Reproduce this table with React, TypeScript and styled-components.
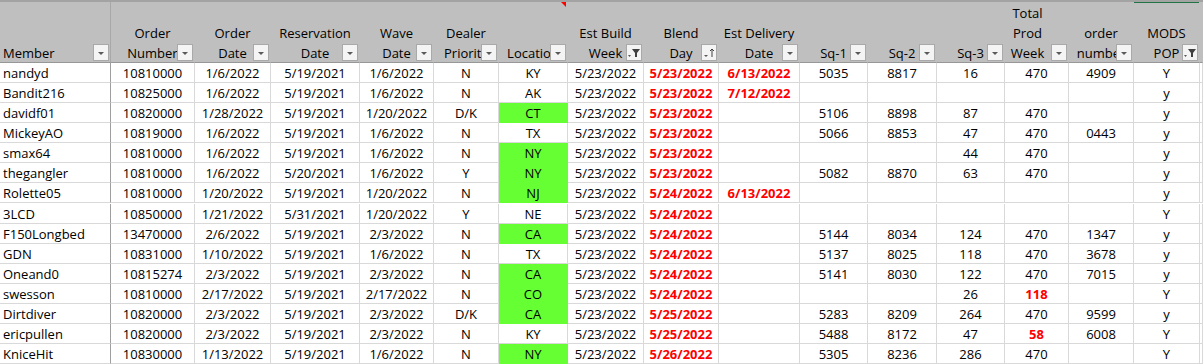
import { Fragment } from "react";
import styled, { createGlobalStyle } from "styled-components";

const GlobalStyle = createGlobalStyle`
	html, body {
		margin: 0;
		padding: 0;
		background: #ffffff;
	}
	body {
		font-family: "Open Sans", "Liberation Sans", sans-serif;
		font-size: 13px;
		color: #000000;
	}
`;

const COLS = [111, 84, 76, 89, 74, 65, 69, 76, 75, 81, 68, 69, 68, 64, 65, 66];

const Sheet = styled.div`
	display: grid;
	grid-template-columns: ${COLS.map((w) => `${w}px`).join(" ")} 1fr;
	width: 1203px;
	border-top: 2px solid #a3a3a3;
	overflow: hidden;
	height: 362px;
`;

const HeadCell = styled.div<{ $left?: boolean; $divider?: boolean; $selected?: boolean; $shift?: number }>`
	position: relative;
	box-sizing: border-box;
	height: 61px;
	background: #bfbfbf;
	border-bottom: 1px solid #979797;
	border-right: 1px solid ${(p) => (p.$divider ? "#a8a8a8" : "#bfbfbf")};
	display: flex;
	flex-direction: column;
	justify-content: flex-end;
	align-items: ${(p) => (p.$left ? "flex-start" : "center")};
	padding-left: ${(p) => (p.$left ? "3px" : "0")};
	padding-right: ${(p) => p.$shift ?? 0}px;
	white-space: nowrap;
	overflow: hidden;
	box-shadow: ${(p) => (p.$selected ? "inset 0 1px 0 #217346" : "none")};
`;

const HeadLine = styled.span`
	display: block;
	height: 20px;
	line-height: 22px;
`;

const FilterButton = styled.div`
	position: absolute;
	right: 1px;
	bottom: 1px;
	width: 16px;
	height: 17px;
	box-sizing: border-box;
	background: #f4f4f4;
	border: 1px solid #a9a9a9;
	display: flex;
	align-items: center;
	justify-content: center;
`;

const CommentMark = styled.div`
	position: absolute;
	top: 0;
	right: 1px;
	width: 0;
	height: 0;
	border-top: 5px solid #ff0000;
	border-left: 5px solid transparent;
`;

const Cell = styled.div<{ $left?: boolean; $divider?: boolean; $fill?: string; $alert?: boolean }>`
	box-sizing: border-box;
	height: 20px;
	line-height: 20px;
	padding: 0 ${(p) => (p.$left ? "3px" : "1px")};
	text-align: ${(p) => (p.$left ? "left" : "center")};
	white-space: nowrap;
	overflow: hidden;
	background: ${(p) => p.$fill ?? "#ffffff"};
	border-bottom: 1px solid ${(p) => p.$fill ?? "#d9d9d9"};
	border-right: 1px solid ${(p) => (p.$divider ? "#9e9e9e" : p.$fill ?? "#d9d9d9")};
	color: ${(p) => (p.$alert ? "#ff0000" : "#000000")};
	font-weight: ${(p) => (p.$alert ? 700 : 400)};
`;

type FilterKind = "drop" | "filter" | "sort";

const Arrow = () => (
	<svg width="14" height="15" viewBox="0 0 14 15">
		<polygon points="4,7 10,7 7,10" fill="#595959" />
	</svg>
);

const FunnelIcon = () => (
	<svg width="14" height="15" viewBox="0 0 14 15">
		<polygon points="1,10 4,10 2.5,12" fill="#595959" />
		<polygon points="5,4 13,4 10,8 10,12 8,12 8,8" fill="#404040" />
	</svg>
);

const SortIcon = () => (
	<svg width="14" height="15" viewBox="0 0 14 15">
		<polygon points="2,10 6,10 4,12" fill="#595959" />
		<line x1="10" y1="4" x2="10" y2="12" stroke="#404040" strokeWidth="1" />
		<polyline points="8,6 10,4 12,6" fill="none" stroke="#404040" strokeWidth="1" />
	</svg>
);

const headers: { lines: string[]; kind: FilterKind; shift?: number }[] = [
	{ lines: ["Member"], kind: "drop" },
	{ lines: ["Order", "Number"], kind: "drop" },
	{ lines: ["Order", "Date"], kind: "drop" },
	{ lines: ["Reservation", "Date"], kind: "drop" },
	{ lines: ["Wave", "Date"], kind: "drop" },
	{ lines: ["Dealer", "Priority"], kind: "drop" },
	{ lines: ["Location"], kind: "drop" },
	{ lines: ["Est Build", "Week"], kind: "filter" },
	{ lines: ["Blend", "Day"], kind: "sort" },
	{ lines: ["Est Delivery", "Date"], kind: "drop" },
	{ lines: ["Sq-1"], kind: "drop" },
	{ lines: ["Sq-2"], kind: "drop" },
	{ lines: ["Sq-3"], kind: "drop" },
	{ lines: ["Total", "Prod", "Week"], kind: "drop", shift: 18 },
	{ lines: ["order", "number"], kind: "drop" },
	{ lines: ["MODS", "POP"], kind: "filter" },
];

type Row = {
	cells: string[];
	green?: boolean;
	prodAlert?: boolean;
};

const rows: Row[] = [
	{ cells: ["nandyd", "10810000", "1/6/2022", "5/19/2021", "1/6/2022", "N", "KY", "5/23/2022", "5/23/2022", "6/13/2022", "5035", "8817", "16", "470", "4909", "Y"] },
	{ cells: ["Bandit216", "10825000", "1/6/2022", "5/19/2021", "1/6/2022", "N", "AK", "5/23/2022", "5/23/2022", "7/12/2022", "", "", "", "", "", "y"] },
	{ cells: ["davidf01", "10820000", "1/28/2022", "5/19/2021", "1/20/2022", "D/K", "CT", "5/23/2022", "5/23/2022", "", "5106", "8898", "87", "470", "", "y"], green: true },
	{ cells: ["MickeyAO", "10819000", "1/6/2022", "5/19/2021", "1/6/2022", "N", "TX", "5/23/2022", "5/23/2022", "", "5066", "8853", "47", "470", "0443", "y"] },
	{ cells: ["smax64", "10810000", "1/6/2022", "5/19/2021", "1/6/2022", "N", "NY", "5/23/2022", "5/23/2022", "", "", "", "44", "470", "", "y"], green: true },
	{ cells: ["thegangler", "10810000", "1/6/2022", "5/20/2021", "1/6/2022", "Y", "NY", "5/23/2022", "5/23/2022", "", "5082", "8870", "63", "470", "", "y"], green: true },
	{ cells: ["Rolette05", "10810000", "1/20/2022", "5/19/2021", "1/20/2022", "N", "NJ", "5/23/2022", "5/24/2022", "6/13/2022", "", "", "", "", "", "y"], green: true },
	{ cells: ["3LCD", "10850000", "1/21/2022", "5/31/2021", "1/20/2022", "Y", "NE", "5/23/2022", "5/24/2022", "", "", "", "", "", "", "Y"] },
	{ cells: ["F150Longbed", "13470000", "2/6/2022", "5/19/2021", "2/3/2022", "N", "CA", "5/23/2022", "5/24/2022", "", "5144", "8034", "124", "470", "1347", "y"], green: true },
	{ cells: ["GDN", "10831000", "1/10/2022", "5/19/2021", "1/6/2022", "N", "TX", "5/23/2022", "5/24/2022", "", "5137", "8025", "118", "470", "3678", "y"] },
	{ cells: ["Oneand0", "10815274", "2/3/2022", "5/19/2021", "2/3/2022", "N", "CA", "5/23/2022", "5/24/2022", "", "5141", "8030", "122", "470", "7015", "y"], green: true },
	{ cells: ["swesson", "10810000", "2/17/2022", "5/19/2021", "2/17/2022", "N", "CO", "5/23/2022", "5/24/2022", "", "", "", "26", "118", "", "Y"], green: true, prodAlert: true },
	{ cells: ["Dirtdiver", "10820000", "2/3/2022", "5/19/2021", "2/3/2022", "D/K", "CA", "5/23/2022", "5/25/2022", "", "5283", "8209", "264", "470", "9599", "y"], green: true },
	{ cells: ["ericpullen", "10820000", "2/3/2022", "5/19/2021", "2/3/2022", "N", "KY", "5/23/2022", "5/25/2022", "", "5488", "8172", "47", "58", "6008", "Y"], prodAlert: true },
	{ cells: ["KniceHit", "10830000", "1/13/2022", "5/19/2021", "1/6/2022", "N", "NY", "5/23/2022", "5/26/2022", "", "5305", "8236", "286", "470", "", "Y"], green: true },
];

const GREEN = "#66ff33";

function App() {
	return (
		<>
			<GlobalStyle />
			<Sheet>
				{headers.map((h, i) => (
					<HeadCell key={i} $left={i === 0} $divider={i === 0} $selected={i === 15} $shift={h.shift}>
						{h.lines.map((l) => (
							<HeadLine key={l}>{l}</HeadLine>
						))}
						{i === 6 && <CommentMark />}
						<FilterButton>
							{h.kind === "drop" && <Arrow />}
							{h.kind === "filter" && <FunnelIcon />}
							{h.kind === "sort" && <SortIcon />}
						</FilterButton>
					</HeadCell>
				))}
				<HeadCell />
				{rows.map((r, ri) => (
					<Fragment key={ri}>
						{r.cells.map((c, ci) => (
							<Cell
								key={ci}
								$left={ci === 0}
								$divider={ci === 0}
								$fill={ci === 6 && r.green ? GREEN : undefined}
								$alert={ci === 8 || ci === 9 || (ci === 13 && r.prodAlert)}
							>
								{c}
							</Cell>
						))}
						<Cell />
					</Fragment>
				))}
			</Sheet>
		</>
	);
}

export default App;
